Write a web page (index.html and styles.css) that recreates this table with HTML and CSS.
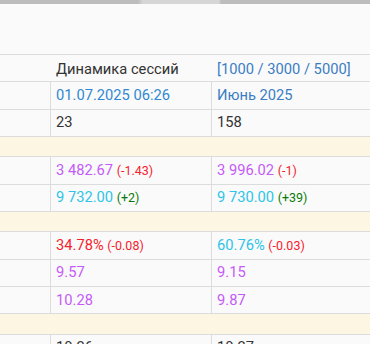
FILE: index.html
```html
<!DOCTYPE html>
<html lang="ru">
<head>
<meta charset="utf-8">
<title>Динамика сессий</title>
<link rel="stylesheet" href="styles.css">
</head>
<body>
<div class="topbar"></div>
<div class="blank"></div>
<div class="table">
  <div class="row head">
    <div class="cell c0"></div>
    <div class="cell c1">Динамика сессий</div>
    <div class="cell c2 link">[1000 / 3000 / 5000]</div>
  </div>
  <div class="row">
    <div class="cell c0"></div>
    <div class="cell c1 date">01.07.2025 06:26</div>
    <div class="cell c2 link">Июнь 2025</div>
  </div>
  <div class="row">
    <div class="cell c0"></div>
    <div class="cell c1">23</div>
    <div class="cell c2">158</div>
  </div>
  <div class="row sep"></div>
  <div class="row">
    <div class="cell c0"></div>
    <div class="cell c1"><span class="purple">3 482.67</span> <span class="small red">(-1.43)</span></div>
    <div class="cell c2"><span class="purple">3 996.02</span> <span class="small red">(-1)</span></div>
  </div>
  <div class="row">
    <div class="cell c0"></div>
    <div class="cell c1"><span class="cyan">9 732.00</span> <span class="small green">(+2)</span></div>
    <div class="cell c2"><span class="cyan">9 730.00</span> <span class="small green">(+39)</span></div>
  </div>
  <div class="row sep"></div>
  <div class="row">
    <div class="cell c0"></div>
    <div class="cell c1"><span class="red">34.78%</span> <span class="small red">(-0.08)</span></div>
    <div class="cell c2"><span class="cyan">60.76%</span> <span class="small red">(-0.03)</span></div>
  </div>
  <div class="row">
    <div class="cell c0"></div>
    <div class="cell c1 purple">9.57</div>
    <div class="cell c2 purple">9.15</div>
  </div>
  <div class="row">
    <div class="cell c0"></div>
    <div class="cell c1 purple">10.28</div>
    <div class="cell c2 purple">9.87</div>
  </div>
  <div class="row sep"></div>
  <div class="row">
    <div class="cell c0"></div>
    <div class="cell c1">10.26</div>
    <div class="cell c2">10.27</div>
  </div>
</div>
</body>
</html>
```
FILE: styles.css
```css
html, body {
  margin: 0;
  padding: 0;
  background: #fafafa;
  overflow: hidden;
}

body {
  font-family: Roboto, "Liberation Sans", sans-serif;
  font-size: 14.7px;
  color: #333;
}

.topbar {
  height: 4px;
  background: linear-gradient(to right, #bcbcbc 0 138px, #d6d6d6 143px 219px, #bcbcbc 221px);
}

.blank {
  height: 50px;
  background: #fafafa;
}

.table {
  display: flex;
  flex-direction: column;
}

.row {
  display: grid;
  grid-template-columns: 50px 161px 1fr;
  box-sizing: border-box;
  height: 27.25px;
  border-top: 1px solid #dcdcdc;
  background: #fafafa;
}

.row.sep {
  display: block;
  height: 20.6px;
  background: #fdf6e3;
}

.cell {
  box-sizing: border-box;
  padding: 2.6px 5px 0;
  line-height: 20.85px;
  white-space: nowrap;
  overflow: hidden;
}

.c1, .c2 {
  border-left: 1px solid #dcdcdc;
}

.head .cell {
  border-left: none;
  padding-top: 3.6px;
  padding-left: 6px;
}

.link {
  color: #3b7dc4;
}

.date {
  color: #2f88d3;
}

.purple {
  color: #c55af8;
}

.cyan {
  color: #2ec4e8;
}

.red {
  color: #f5222d;
}

.green {
  color: #0b7a0b;
}

.small {
  font-size: 12.5px;
}
```
